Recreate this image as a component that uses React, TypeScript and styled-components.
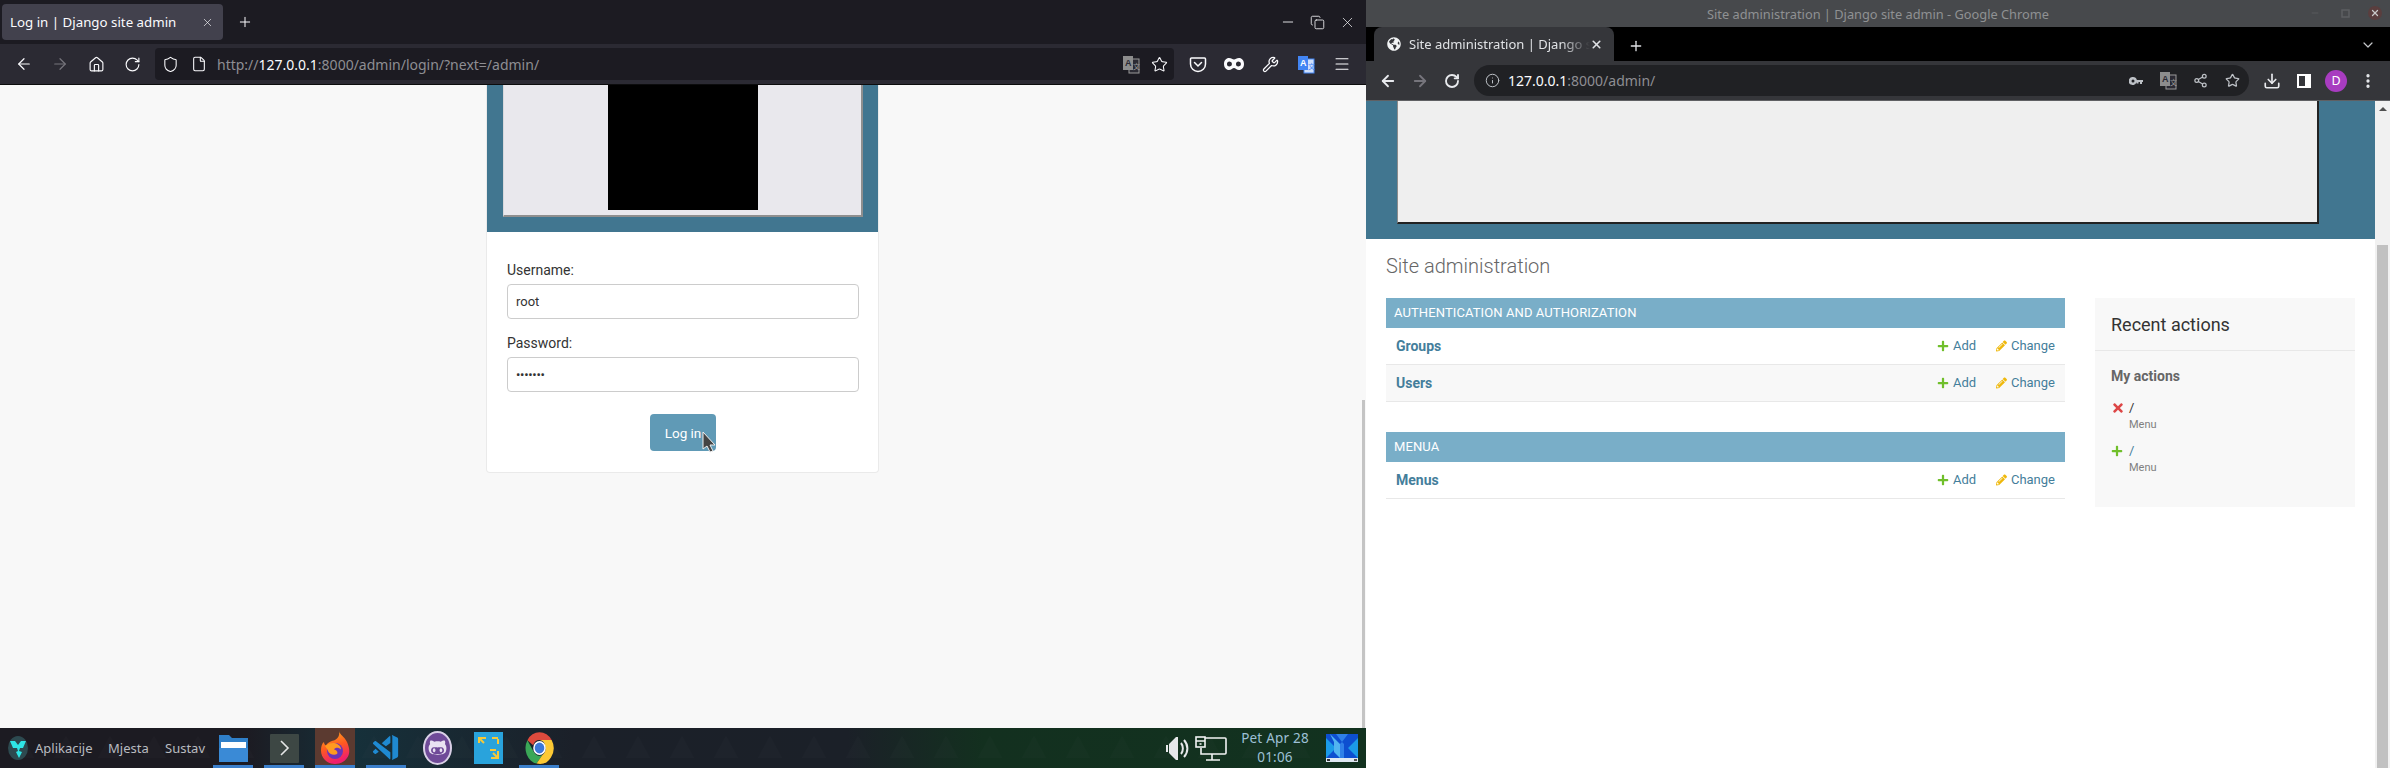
import styled, { createGlobalStyle } from 'styled-components';
import {
  ArrowLeft,
  ArrowRight,
  ChevronDown,
  Copy,
  Download,
  File as FileIcon,
  Home,
  Info,
  Menu as MenuIcon,
  Minus,
  MoreVertical,
  Plus,
  RotateCw,
  Share2,
  Shield,
  Star,
  Wrench,
  X,
} from 'lucide-react';
import { FaGithubAlt, FaGlobeAmericas, FaPencilAlt, FaPlus, FaTimes } from 'react-icons/fa';
import { VscVscodeInsiders } from 'react-icons/vsc';

const GlobalStyle = createGlobalStyle`
  html, body {
    margin: 0;
    padding: 0;
    background: #fff;
    overflow: hidden;
  }
  * { box-sizing: border-box; }
`;

const Desktop = styled.div`
  width: 2390px;
  height: 768px;
  display: flex;
  overflow: hidden;
  font-family: "Noto Sans", sans-serif;
`;

const FirefoxColumn = styled.div`
  width: 1366px;
  height: 768px;
  display: flex;
  flex-direction: column;
  flex: none;
`;

const ChromeColumn = styled.div`
  width: 1024px;
  height: 768px;
  display: flex;
  flex-direction: column;
  flex: none;
`;

/* firefox */
const FfTitleBar = styled.div`
  height: 44px;
  background: #1c1b22;
  display: flex;
  align-items: center;
  padding-left: 2px;
  color: #fbfbfe;
`;

const FfTab = styled.div`
  width: 221px;
  height: 36px;
  background: #42414d;
  border-radius: 4px;
  display: flex;
  align-items: center;
  padding: 0 9px 0 8px;
  font-size: 13.3px;
  color: #fbfbfe;
`;

const FfTabLabel = styled.span`
  flex: 1;
  white-space: nowrap;
`;

const NewTab = styled.div<{ $left: number }>`
  margin-left: ${(p) => p.$left}px;
  display: flex;
  align-items: center;
`;

const FfWindowButtons = styled.div`
  margin-left: auto;
  display: flex;
  align-items: center;
  gap: 14px;
  padding-right: 10px;
`;

const FfToolbar = styled.div`
  height: 41px;
  background: #2b2a33;
  border-bottom: 1px solid #0c0c0d;
  display: flex;
  align-items: center;
  padding: 0 6px;
  flex: none;
  color: #fbfbfe;
`;

const IconSlot = styled.div<{ $w: number; $dim?: boolean }>`
  width: ${(p) => p.$w}px;
  flex: none;
  display: flex;
  align-items: center;
  justify-content: center;
  color: ${(p) => (p.$dim ? '#76757c' : 'inherit')};
`;

const FfUrlBar = styled.div`
  flex: 1;
  height: 32px;
  margin: 0 6px 0 5px;
  background: #1c1b22;
  border-radius: 4px;
  display: flex;
  align-items: center;
  padding-left: 6px;
`;

const UrlText = styled.div<{ $size: number; $left: number }>`
  font-size: ${(p) => p.$size}px;
  margin-left: ${(p) => p.$left}px;
  flex: 1;
  color: #8e8e93;
  white-space: nowrap;
  b {
    font-weight: 400;
    color: #fbfbfe;
  }
`;

const LoginPage = styled.div`
  flex: 1;
  min-height: 0;
  position: relative;
  overflow: hidden;
  background: #f8f8f8;
  padding-right: 1px;
  font-family: Roboto, sans-serif;
`;

const PageScrollThumb = styled.div`
  position: absolute;
  right: 1px;
  top: 315px;
  bottom: 0;
  width: 3px;
  background: #c4c4c4;
`;

const LoginCard = styled.div`
  width: 393px;
  margin: 0 auto;
  background: #fff;
  border: 1px solid #eaeaea;
  border-top: 0;
  border-radius: 0 0 4px 4px;
`;

const LoginHeader = styled.div`
  background: #417690;
  padding: 0 15px 15px 16px;
`;

const LoginImageFrame = styled.div`
  height: 132px;
  background: #e9e8ed;
  border-left: 1px solid #d8d8dc;
  border-right: 2px solid #8f8f8f;
  border-bottom: 2px solid #8f8f8f;
  display: flex;
  justify-content: center;
`;

const BlackImage = styled.div`
  width: 150px;
  height: 125px;
  background: #000;
`;

const LoginForm = styled.form`
  padding: 28px 19px 21px 20px;
  display: flex;
  flex-direction: column;
`;

const FieldLabel = styled.label`
  font-size: 14px;
  line-height: 20px;
  color: #333;
  margin-bottom: 4px;
`;

const FieldValue = styled.div<{ $spaced?: boolean }>`
  height: 35px;
  border: 1px solid #ccc;
  border-radius: 4px;
  padding: 0 8px;
  display: flex;
  align-items: center;
  font-size: 13px;
  color: #333;
  margin-bottom: 14px;
  letter-spacing: ${(p) => (p.$spaced ? '-0.3px' : '0')};
`;

const SubmitRow = styled.div`
  display: flex;
  justify-content: center;
  margin-top: 8px;
`;

const SubmitButton = styled.div`
  position: relative;
  width: 66px;
  height: 37px;
  border-radius: 4px;
  background: #609ab6;
  color: #fff;
  font-size: 13.5px;
  display: flex;
  align-items: center;
  justify-content: center;
`;

const Pointer = styled.svg`
  position: absolute;
  left: 52px;
  top: 17px;
`;

/* panel */
const Taskbar = styled.div`
  height: 40px;
  flex: none;
  position: relative;
  overflow: hidden;
  display: flex;
  align-items: center;
  padding-left: 8px;
  background: linear-gradient(90deg, #1c1b22 0%, #1c1b22 18%, #16303a 26%, #1b2029 42%, #1b2028 62%, #13301f 72%, #12321f 100%);
  font-size: 13px;
  color: #b9bcc0;
`;

const TaskbarPattern = styled.svg`
  position: absolute;
  inset: 0;
`;

const PanelLogo = styled.svg`
  position: relative;
  flex: none;
  margin-right: 7px;
`;

const PanelMenu = styled.span<{ $w: number }>`
  position: relative;
  width: ${(p) => p.$w}px;
  flex: none;
  white-space: nowrap;
`;

const TaskList = styled.div`
  position: relative;
  display: flex;
  gap: 11px;
  height: 40px;
`;

const TaskItem = styled.div<{ $running?: boolean; $active?: boolean }>`
  width: 40px;
  height: 40px;
  display: flex;
  align-items: center;
  justify-content: center;
  background: ${(p) => (p.$active ? '#5b3a30' : 'transparent')};
  border-bottom: 3px solid ${(p) => (p.$running ? '#3b7fcb' : 'transparent')};
  padding-top: 3px;
`;

const Tray = styled.div`
  position: relative;
  margin-left: auto;
  display: flex;
  align-items: center;
  height: 40px;
  padding-right: 8px;
`;

const Clock = styled.div`
  width: 88px;
  margin: 0 7px 0 4px;
  text-align: center;
  color: #9dc0d6;
  font-size: 13.5px;
  line-height: 19px;
  letter-spacing: 0.2px;
`;

/* chrome */
const CrTitleBar = styled.div`
  height: 27px;
  flex: none;
  background: #47494c;
  display: flex;
  align-items: center;
  justify-content: center;
  position: relative;
  color: #8f9193;
  font-size: 12.8px;
`;

const CrWindowButtons = styled.div`
  position: absolute;
  right: 8px;
  top: 6px;
  display: flex;
  gap: 16px;
`;

const CrWindowButton = styled.div<{ $close?: boolean }>`
  width: 14px;
  height: 14px;
  border-radius: 50%;
  background: ${(p) => (p.$close ? '#5a3e3e' : 'transparent')};
  color: ${(p) => (p.$close ? '#c9c9c9' : '#5d5f62')};
  display: flex;
  align-items: center;
  justify-content: center;
`;

const CrTabStrip = styled.div`
  height: 34px;
  flex: none;
  background: #000;
  display: flex;
  align-items: flex-end;
  padding-left: 8px;
  color: #dfe1e4;
`;

const CrTab = styled.div`
  width: 240px;
  height: 34px;
  background: #35363a;
  border-radius: 8px 8px 0 0;
  display: flex;
  align-items: center;
  padding: 0 11px 0 13px;
  font-size: 13px;
  color: #e0e2e5;
`;

const CrTabLabel = styled.span`
  flex: 1;
  margin-left: 8px;
  overflow: hidden;
  white-space: nowrap;
  -webkit-mask-image: linear-gradient(90deg, #000 84%, transparent 100%);
  mask-image: linear-gradient(90deg, #000 84%, transparent 100%);
`;

const CrNewTab = styled.div`
  margin: 0 auto 7px 14px;
  display: flex;
`;

const CrStripEnd = styled.div`
  margin: 0 14px 8px 0;
  display: flex;
  color: #c4c6c9;
`;

const CrToolbar = styled.div`
  height: 40px;
  flex: none;
  background: #35363a;
  border-bottom: 1px solid #5f6063;
  display: flex;
  align-items: center;
  padding: 0 6px;
  color: #e8eaed;
`;

const Omnibox = styled.div`
  flex: 1;
  height: 31px;
  margin: 0 7px 0 6px;
  background: #202124;
  border-radius: 16px;
  display: flex;
  align-items: center;
  padding: 0 1px 0 8px;
  color: #bdc1c6;
`;

const Avatar = styled.div`
  width: 22px;
  height: 22px;
  border-radius: 50%;
  background: #a83cc0;
  color: #fff;
  font-size: 12.5px;
  display: flex;
  align-items: center;
  justify-content: center;
`;

const AdminViewport = styled.div`
  flex: 1;
  min-height: 0;
  display: flex;
  background: #fff;
  font-family: Roboto, sans-serif;
`;

const AdminPage = styled.div`
  flex: 1;
  min-width: 0;
`;

const Scrollbar = styled.div`
  width: 15px;
  flex: none;
  background: #f1f1f1;
  display: flex;
  flex-direction: column;
  align-items: center;
  padding-top: 6px;
`;

const ScrollArrow = styled.div`
  width: 0;
  height: 0;
  border-left: 4px solid transparent;
  border-right: 4px solid transparent;
  border-bottom: 4px solid #505050;
`;

const ScrollThumb = styled.div`
  width: 11px;
  flex: 1;
  margin-top: 134px;
  background: #c1c1c1;
`;

const Banner = styled.div`
  height: 138px;
  background: #417690;
  padding: 0 56px 15px 31px;
`;

const BannerImage = styled.div`
  height: 123px;
  background: #efefef;
  border-left: 1px solid #8c8c8c;
  border-right: 2px solid #222;
  border-bottom: 2px solid #222;
`;

const Content = styled.div`
  padding: 0 20px;
`;

const PageTitle = styled.h1`
  margin: 15px 0 20px;
  font-size: 20px;
  line-height: 24px;
  font-weight: 300;
  color: #666;
`;

const Columns = styled.div`
  display: flex;
  gap: 30px;
  align-items: flex-start;
`;

const AppList = styled.div`
  flex: 1;
  min-width: 0;
  display: flex;
  flex-direction: column;
  gap: 30px;
`;

const Caption = styled.div`
  height: 30px;
  background: #79aec8;
  color: #fff;
  font-size: 13px;
  letter-spacing: 0.1px;
  text-transform: uppercase;
  padding: 0 0 1px 8px;
  display: flex;
  align-items: center;
`;

const ModelRow = styled.div<{ $alt?: boolean }>`
  height: 37px;
  background: ${(p) => (p.$alt ? '#f8f8f8' : '#fff')};
  border-bottom: 1px solid #e8e8e8;
  display: flex;
  align-items: center;
  padding: 0 10px;
  font-size: 13px;
  color: #447e9b;
`;

const ModelName = styled.span`
  flex: 1;
  font-size: 14px;
  font-weight: 700;
`;

const RowAction = styled.span<{ $w: number }>`
  width: ${(p) => p.$w}px;
  display: flex;
  align-items: center;
  gap: 4px;
  padding-bottom: 1px;
`;

const ActionsPanel = styled.aside`
  width: 260px;
  height: 209px;
  flex: none;
  background: #f8f8f8;
`;

const ActionsTitle = styled.h2`
  margin: 0;
  height: 53px;
  padding: 0 16px;
  border-bottom: 1px solid #e8e8e8;
  display: flex;
  align-items: center;
  font-size: 18px;
  font-weight: 400;
  color: #333;
`;

const ActionsBody = styled.div`
  padding: 17px 16px 0;
`;

const ActionsSubtitle = styled.h3`
  margin: 0 0 15px;
  font-size: 14px;
  line-height: 16px;
  font-weight: 700;
  color: #666;
`;

const ActionItem = styled.div`
  display: grid;
  grid-template-columns: 18px 1fr;
  margin-bottom: 9px;
  align-items: center;
`;

const ActionLink = styled.span<{ $linked?: boolean }>`
  font-size: 13px;
  line-height: 17px;
  color: ${(p) => (p.$linked ? '#447e9b' : '#333')};
`;

const ActionType = styled.span`
  grid-column: 2;
  font-size: 11px;
  line-height: 17px;
  color: #808080;
`;

const TranslateIcon = ({ blue }: { blue?: boolean }) => (
  <svg width="18" height="19" viewBox="0 0 18 19">
    <rect x="7" y="4" width="10" height="14" fill={blue ? '#cfe0fb' : '#2b2a33'} stroke={blue ? '#4285f4' : '#9a9a9a'} />
    <rect x="1" y="1" width="10" height="14" fill={blue ? '#4285f4' : '#8d8d8d'} />
    <text x="3" y="11" fontSize="9" fontWeight="700" fontFamily="Liberation Sans, sans-serif" fill={blue ? '#fff' : '#2b2a33'}>A</text>
    <text x="11" y="14" fontSize="7" fontFamily="Noto Sans CJK SC, sans-serif" fill={blue ? '#4285f4' : '#9a9a9a'}>文</text>
  </svg>
);

const PocketIcon = () => (
  <svg width="18" height="18" viewBox="0 0 18 18" fill="none" stroke="#fbfbfe" strokeWidth="1.5">
    <path d="M2.5 3h13a1 1 0 0 1 1 1v5a7.5 7.5 0 0 1-15 0V4a1 1 0 0 1 1-1Z" />
    <path d="M5.5 7.5 9 11l3.5-3.5" strokeLinecap="round" />
  </svg>
);

const MaskIcon = () => (
  <svg width="20" height="14" viewBox="0 0 20 14">
    <path fillRule="evenodd" fill="#fbfbfe" d="M5 1c2.4 0 3.6 1.6 5 1.6S12.600 1 15 1c2.800 0 5 2.500 5 6s-2.200 6-5 6c-2.400 0-3.600-2-5-2s-2.600 2-5 2c-2.800 0-5-2.500-5-6s2.200-6 5-6Zm.5 3.500a2.500 2.500 0 1 0 0 5 2.500 2.500 0 0 0 0-5Zm9 0a2.500 2.500 0 1 0 0 5 2.500 2.500 0 0 0 0-5Z" />
  </svg>
);

const KeyIcon = () => (
  <svg width="14" height="8" viewBox="0 0 14 8">
    <path fillRule="evenodd" fill="#bdc1c6" d="M4 0a4 4 0 0 1 3.900 3H14v2h-1v2h-2V5H9.500v1.500h-2V5.300A4 4 0 1 1 4 0Zm0 2.500a1.500 1.500 0 1 0 0 3 1.500 1.500 0 0 0 0-3Z" />
  </svg>
);

const SidePanelIcon = () => (
  <svg width="16" height="16" viewBox="0 0 16 16">
    <path fillRule="evenodd" fill="#fff" d="M0 1h14v14H0V1Zm2 2v10h6V3H2Z" transform="translate(1 0)" />
  </svg>
);

const SpeakerIcon = () => (
  <svg width="24" height="25" viewBox="0 0 24 25">
    <path fill="#e6e8ea" d="M0 9h2v7H0zM3 8l7-7h2v23h-2l-7-7z" />
    <path fill="none" stroke="#e6e8ea" strokeWidth="2" d="M15 7c2.500 3 2.500 8 0 11M18 4c4.500 5 4.500 12 0 17" />
  </svg>
);

const NetworkIcon = () => (
  <svg width="32" height="25" viewBox="0 0 32 25" fill="none" stroke="#f2f3f4" strokeWidth="1.6">
    <path d="M9 2h21a1 1 0 0 1 1 1v14a1 1 0 0 1-1 1H6v-6" />
    <rect x="1" y="1" width="9" height="10" fill="#12321f" />
    <path d="M1 5h9M4.500 8h2M17 18v6M11 24h14" />
  </svg>
);

const DesktopThumb = () => (
  <svg width="32" height="28" viewBox="0 0 32 28">
    <rect width="32" height="28" fill="#0d4fd0" />
    <path fill="#1b9be8" d="M0 4 10 14 0 24ZM32 4 22 14 32 24Z" />
    <path fill="#2f80e8" d="M10 0 16 8 22 0ZM14 10 16 8 18 10V24H14Z" />
    <path fill="#52b4f0" d="M4 0 14 10V24L8 18V8Z" />
    <rect y="24" width="32" height="4" fill="#dfe8f2" />
    <rect x="1" y="25" width="3" height="2" fill="#333" />
    <rect x="28" y="25" width="3" height="2" fill="#555" />
  </svg>
);

const FolderIcon = () => (
  <svg width="29" height="30" viewBox="0 0 29 30">
    <path fill="#2f7fc8" d="M0 2h10l3 3h16v24H0z" />
    <path fill="#fff" d="M2 9h25v6H2z" />
    <path fill="#3a8ad6" d="M0 15h29v14H0z" />
  </svg>
);

const TerminalIcon = () => (
  <svg width="29" height="30" viewBox="0 0 29 30">
    <rect width="29" height="29" y="1" rx="1" fill="#3d4744" />
    <path d="m11 8 7 7-7 7" fill="none" stroke="#e4e6e6" strokeWidth="1.600" />
  </svg>
);

const FirefoxIcon = () => (
  <svg width="29" height="34" viewBox="0 0 29 34">
    <defs>
      <linearGradient id="ffBody" x1="0" y1="0" x2="0.3" y2="1">
        <stop offset="0" stopColor="#ffb41e" />
        <stop offset="0.55" stopColor="#ff5a20" />
        <stop offset="1" stopColor="#f01e6e" />
      </linearGradient>
    </defs>
    <path fill="url(#ffBody)" d="M18 0c1 4 5 5 8 11 3 7 3 12 0 16-2.800 4-7 6-12 6C6 33 0 27 0 19.500 0 15 1 12.500 3 11c0 2 1 3 2 3.500C7 11 11 10 14 9c3-1.500 5-5 4-9Z" />
    <circle cx="14" cy="20" r="8" fill="#6c33b8" />
    <path fill="#ff9a20" d="M4 15c4-3 9-4 13-1.500 2 1.200 3 3 3 5-2.500-2.500-6-2-7 0 3 .5 4 3 3 4.500-3 2-8 0-9-3-.5-1.500-1.500-3-3-5Z" />
  </svg>
);

const GithubIcon = () => (
  <svg width="29" height="34" viewBox="0 0 29 34">
    <ellipse cx="14.500" cy="17" rx="13.500" ry="16" fill="#6f4a98" stroke="#d9cfe6" strokeWidth="2" />
    <foreignObject x="5" y="7" width="19" height="24">
      <FaGithubAlt size={19} color="#e9e2f2" />
    </foreignObject>
  </svg>
);

const ArrowsAppIcon = () => (
  <svg width="29" height="34" viewBox="0 0 29 34">
    <rect y="1" width="29" height="32" fill="#29a3dc" />
    <path fill="none" stroke="#f5c83a" strokeWidth="2" d="M5 12V7h7M5 7l5 5M24 13V8M18 7h6M24 20v7h-7M24 27l-5-5M16 19h6" />
  </svg>
);

const ChromeLogo = () => (
  <svg width="29" height="34" viewBox="-15 -17 30 34">
    <g transform="scale(1 1.13)">
      <path fill="#dd4a3d" d="M-12.500-7.200A14.500 14.500 0 0 1 12.550-7.250H0A7 7 0 0 0-6.500-2.500Z" />
      <path fill="#3aa757" d="M-12.500-7.200-6 3.500A7 7 0 0 0 3 6.500L-3 14.300A14.500 14.500 0 0 1-12.500-7.200Z" />
      <path fill="#fcc934" d="M12.550-7.250A14.500 14.500 0 0 1-3 14.300L3 6.500A7 7 0 0 0 6-1 7 7 0 0 0 0-7.250Z" />
      <circle r="6.500" fill="#fff" />
      <circle r="5" fill="#3c78d8" />
    </g>
  </svg>
);

const rows = [
  { caption: 'Authentication and Authorization', models: ['Groups', 'Users'] },
  { caption: 'Menua', models: ['Menus'] },
];

export default function App() {
  return (
    <>
      <GlobalStyle />
      <Desktop>
        <FirefoxColumn>
          <FfTitleBar>
            <FfTab>
              <FfTabLabel>Log in | Django site admin</FfTabLabel>
              <X size={13} strokeWidth={1.2} />
            </FfTab>
            <NewTab $left={14}>
              <Plus size={16} strokeWidth={1.5} />
            </NewTab>
            <FfWindowButtons>
              <Minus size={16} strokeWidth={1.3} />
              <Copy size={15} strokeWidth={1.3} />
              <X size={17} strokeWidth={1} />
            </FfWindowButtons>
          </FfTitleBar>
          <FfToolbar>
            <IconSlot $w={36}><ArrowLeft size={18} strokeWidth={1.6} /></IconSlot>
            <IconSlot $w={36} $dim><ArrowRight size={18} strokeWidth={1.6} /></IconSlot>
            <IconSlot $w={36}><Home size={17} strokeWidth={1.6} /></IconSlot>
            <IconSlot $w={36}><RotateCw size={17} strokeWidth={1.6} /></IconSlot>
            <FfUrlBar>
              <IconSlot $w={18}><Shield size={17} strokeWidth={1.5} /></IconSlot>
              <IconSlot $w={40}><FileIcon size={16} strokeWidth={1.6} /></IconSlot>
              <UrlText $size={14} $left={-2}>http://<b>127.0.0.1</b>:8000/admin/login/?next=/admin/</UrlText>
              <IconSlot $w={28}><TranslateIcon /></IconSlot>
              <IconSlot $w={28}><Star size={17} strokeWidth={1.5} /></IconSlot>
              <IconSlot $w={1} />
            </FfUrlBar>
            <IconSlot $w={36}><PocketIcon /></IconSlot>
            <IconSlot $w={36}><MaskIcon /></IconSlot>
            <IconSlot $w={36}><Wrench size={17} strokeWidth={1.8} /></IconSlot>
            <IconSlot $w={36}><TranslateIcon blue /></IconSlot>
            <IconSlot $w={36}><MenuIcon size={18} strokeWidth={1.4} /></IconSlot>
          </FfToolbar>
          <LoginPage>
            <LoginCard>
              <LoginHeader>
                <LoginImageFrame>
                  <BlackImage />
                </LoginImageFrame>
              </LoginHeader>
              <LoginForm>
                <FieldLabel>Username:</FieldLabel>
                <FieldValue>root</FieldValue>
                <FieldLabel>Password:</FieldLabel>
                <FieldValue $spaced>•••••••</FieldValue>
                <SubmitRow>
                  <SubmitButton>
                    Log in
                    <Pointer width="14" height="22" viewBox="0 0 14 22">
                      <path d="M1 1v17l4-3 3 6 3-1-3-6h5Z" fill="#444" stroke="#eee" strokeWidth="1" />
                    </Pointer>
                  </SubmitButton>
                </SubmitRow>
              </LoginForm>
            </LoginCard>
            <PageScrollThumb />
          </LoginPage>
          <Taskbar>
            <TaskbarPattern width="1366" height="40">
              <defs>
                <pattern id="tri" width="44" height="40" patternUnits="userSpaceOnUse">
                  <path d="M22 8 34 30H10Z" fill="#ffffff" fillOpacity="0.012" />
                </pattern>
              </defs>
              <rect width="1366" height="40" fill="url(#tri)" />
            </TaskbarPattern>
            <PanelLogo width="20" height="24" viewBox="0 0 20 24">
              <ellipse cx="10" cy="12" rx="10" ry="12" fill="#2d4a50" />
              <path fill="#2ee6e6" d="M2 5h5l3 4 3-4h5l-3 7h-3l-1 3 3 1-3 6-3-6 2-1-1-3H5z" />
            </PanelLogo>
            <PanelMenu $w={73}>Aplikacije</PanelMenu>
            <PanelMenu $w={57}>Mjesta</PanelMenu>
            <PanelMenu $w={48}>Sustav</PanelMenu>
            <TaskList>
              <TaskItem $running><FolderIcon /></TaskItem>
              <TaskItem $running><TerminalIcon /></TaskItem>
              <TaskItem $running $active><FirefoxIcon /></TaskItem>
              <TaskItem $running><VscVscodeInsiders size={31} color="#1f8ad2" /></TaskItem>
              <TaskItem><GithubIcon /></TaskItem>
              <TaskItem><ArrowsAppIcon /></TaskItem>
              <TaskItem $running><ChromeLogo /></TaskItem>
            </TaskList>
            <Tray>
              <SpeakerIcon />
              <IconSlot $w={5} />
              <NetworkIcon />
              <Clock>
                Pet Apr 28
                <br />
                01:06
              </Clock>
              <DesktopThumb />
            </Tray>
          </Taskbar>
        </FirefoxColumn>
        <ChromeColumn>
          <CrTitleBar>
            Site administration | Django site admin - Google Chrome
            <CrWindowButtons>
              <CrWindowButton><Minus size={10} /></CrWindowButton>
              <CrWindowButton><svg width="9" height="9"><rect x="1" y="1" width="7" height="7" fill="none" stroke="#5d5f62" strokeWidth="1.500" /></svg></CrWindowButton>
              <CrWindowButton $close><X size={10} strokeWidth={3} /></CrWindowButton>
            </CrWindowButtons>
          </CrTitleBar>
          <CrTabStrip>
            <CrTab>
              <FaGlobeAmericas size={14} color="#f1f3f4" />
              <CrTabLabel>Site administration | Django site admin</CrTabLabel>
              <X size={13} strokeWidth={3} />
            </CrTab>
            <CrNewTab><Plus size={16} strokeWidth={2} /></CrNewTab>
            <CrStripEnd><ChevronDown size={16} strokeWidth={1.8} /></CrStripEnd>
          </CrTabStrip>
          <CrToolbar>
            <IconSlot $w={32}><ArrowLeft size={18} strokeWidth={2.4} /></IconSlot>
            <IconSlot $w={32} $dim><ArrowRight size={18} strokeWidth={2.4} /></IconSlot>
            <IconSlot $w={32}><RotateCw size={16} strokeWidth={2.8} /></IconSlot>
            <Omnibox>
              <IconSlot $w={20}><Info size={15} strokeWidth={1.6} /></IconSlot>
              <UrlText $size={14} $left={6}><b>127.0.0.1</b>:8000/admin/</UrlText>
              <IconSlot $w={32}><KeyIcon /></IconSlot>
              <IconSlot $w={32}><TranslateIcon /></IconSlot>
              <IconSlot $w={32}><Share2 size={15} strokeWidth={2} /></IconSlot>
              <IconSlot $w={32}><Star size={15} strokeWidth={2} /></IconSlot>
            </Omnibox>
            <IconSlot $w={32}><Download size={18} strokeWidth={2.2} /></IconSlot>
            <IconSlot $w={32}><SidePanelIcon /></IconSlot>
            <IconSlot $w={32}><Avatar>D</Avatar></IconSlot>
            <IconSlot $w={32}><MoreVertical size={18} strokeWidth={2.4} /></IconSlot>
          </CrToolbar>
          <AdminViewport>
            <AdminPage>
              <Banner><BannerImage /></Banner>
              <Content>
                <PageTitle>Site administration</PageTitle>
                <Columns>
                  <AppList>
                    {rows.map((app) => (
                      <div key={app.caption}>
                        <Caption>{app.caption}</Caption>
                        {app.models.map((model, i) => (
                          <ModelRow key={model} $alt={i % 2 === 1}>
                            <ModelName>{model}</ModelName>
                            <RowAction $w={59}><FaPlus size={12} color="#70bf2b" />Add</RowAction>
                            <RowAction $w={59}><FaPencilAlt size={12} color="#efb80b" />Change</RowAction>
                          </ModelRow>
                        ))}
                      </div>
                    ))}
                  </AppList>
                  <ActionsPanel>
                    <ActionsTitle>Recent actions</ActionsTitle>
                    <ActionsBody>
                      <ActionsSubtitle>My actions</ActionsSubtitle>
                      <ActionItem>
                        <FaTimes size={14} color="#dd4646" />
                        <ActionLink>/</ActionLink>
                        <ActionType>Menu</ActionType>
                      </ActionItem>
                      <ActionItem>
                        <FaPlus size={12} color="#70bf2b" />
                        <ActionLink $linked>/</ActionLink>
                        <ActionType>Menu</ActionType>
                      </ActionItem>
                    </ActionsBody>
                  </ActionsPanel>
                </Columns>
              </Content>
            </AdminPage>
            <Scrollbar>
              <ScrollArrow />
              <ScrollThumb />
            </Scrollbar>
          </AdminViewport>
        </ChromeColumn>
      </Desktop>
    </>
  );
}
